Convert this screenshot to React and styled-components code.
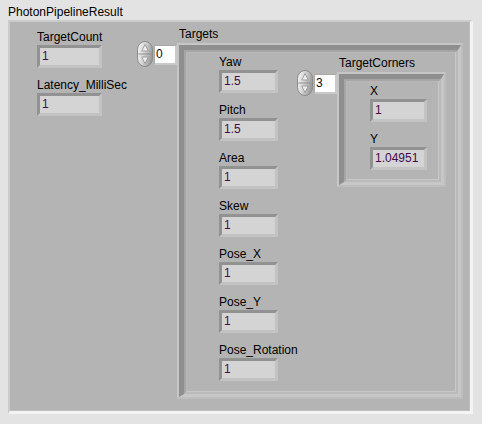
import React, { useId } from "react";
import styled, { createGlobalStyle } from "styled-components";

const GlobalStyle = createGlobalStyle`
  html, body { margin: 0; padding: 0; background: #e3e3e3; }
  body { font-family: "Liberation Sans", Arial, sans-serif; font-size: 12px; color: #000; }
`;

const Page = styled.div`
  box-sizing: border-box;
  width: 482px;
  height: 424px;
  padding: 5px 0 0 8px;
  background: #e3e3e3;
  overflow: hidden;
`;

const Title = styled.div`
  line-height: 14px;
  height: 14px;
  margin-bottom: 1px;
  white-space: nowrap;
`;

const OuterCluster = styled.div`
  box-sizing: border-box;
  width: 465px;
  height: 394px;
  background: #b4b4b4;
  border-style: solid;
  border-width: 2px 3px 3px 2px;
  border-color: #cbcbcb #f4f4f4 #f4f4f4 #cbcbcb;
  box-shadow: inset -1px -1px 0 #bfbfbf;
  display: flex;
  align-items: flex-start;
  padding-left: 27px;
`;

const Column = styled.div`
  display: flex;
  flex-direction: column;
  gap: 10px;
  width: ${(p) => p.$w}px;
  flex: none;
  margin-top: ${(p) => p.$top || 0}px;
`;

const Field = styled.div`
  display: flex;
  flex-direction: column;
  gap: 1px;
`;

const Label = styled.div`
  line-height: 14px;
  height: 14px;
  width: 100%;
  white-space: nowrap;
  overflow: visible;
`;

const NumBox = styled.div`
  box-sizing: border-box;
  width: 100%;
  height: 23px;
  border: 3px solid;
  border-color: #929292 #c3c3c3 #c3c3c3 #929292;
  background: #d4d4d4;
  padding-left: 2px;
  line-height: 17px;
  color: #420c4a;
  white-space: nowrap;
`;

const ArrayBlock = styled.div`
  display: grid;
  grid-template-columns: auto auto;
  grid-template-rows: auto auto;
  flex: none;
  margin-top: ${(p) => p.$top}px;
  margin-left: ${(p) => p.$left}px;
`;

const ArrayLabel = styled.div`
  grid-column: 2;
  grid-row: 1;
  padding-left: 2px;
  line-height: 14px;
  height: 14px;
  margin-bottom: 2px;
  white-space: nowrap;
`;

const IndexControl = styled.div`
  grid-column: 1;
  grid-row: 2;
  display: flex;
  align-items: flex-start;
  margin-top: -2px;
`;

const SpinnerSvg = styled.svg`
  display: block;
  width: 16px;
  height: 26px;
`;

const IndexBox = styled.div`
  box-sizing: border-box;
  width: 23px;
  height: 20px;
  margin: 4px 0 0 1px;
  background: #ffffff;
  border-style: solid;
  border-width: 1px 2px 2px 1px;
  border-color: #a8a8a8 #c9c9c9 #c9c9c9 #a8a8a8;
  padding-left: 1px;
  line-height: 17px;
  color: #0a0a0a;
`;

const ArrayFrame = styled.div`
  grid-column: 2;
  grid-row: 2;
  border: 2px solid;
  border-color: #c6c6c6 #bdbdbd #bdbdbd #c6c6c6;
`;

const ArrayGroove = styled.div`
  border-style: solid;
  border-width: 5px 3px 3px 5px;
  border-color: #8f8f8f #c7c7c7 #c7c7c7 #8f8f8f;
`;

const ArrayWell = styled.div`
  border: 2px solid;
  border-color: #a6a6a6 #bababa #bababa #a6a6a6;
`;

const ElementCluster = styled.div`
  box-sizing: border-box;
  width: ${(p) => p.$w}px;
  height: ${(p) => p.$h}px;
  background: #b4b4b4;
  border: 1px solid;
  border-color: #b8b8b8 #c8c8c8 #c8c8c8 #b8b8b8;
  display: flex;
  align-items: flex-start;
  padding: 2px 0 0 ${(p) => p.$pl}px;
`;

function Spinner() {
  const id = useId().replace(/:/g, "");
  return (
    <SpinnerSvg viewBox="0 0 16 26">
      <defs>
        <linearGradient id={`g${id}`} x1="0" y1="0" x2="1" y2="0.3">
          <stop offset="0" stopColor="#f6f6f6" />
          <stop offset="0.45" stopColor="#dadada" />
          <stop offset="1" stopColor="#9e9e9e" />
        </linearGradient>
      </defs>
      <rect x="0.5" y="0.5" width="15" height="25" rx="7.5" ry="8" fill={`url(#g${id})`} stroke="#8a8a8a" />
      <line x1="1.5" y1="13" x2="14.5" y2="13" stroke="#8e8e8e" strokeWidth="1" />
      <path d="M8 3.5 L11.3 10 L4.7 10 Z" fill="#ececec" stroke="#9a9a9a" strokeWidth="0.9" />
      <path d="M8 22.5 L11.3 16 L4.7 16 Z" fill="#ececec" stroke="#9a9a9a" strokeWidth="0.9" />
    </SpinnerSvg>
  );
}

function Num({ label, value }) {
  return (
    <Field>
      <Label>{label}</Label>
      <NumBox>{value}</NumBox>
    </Field>
  );
}

function ArrayOf({ label, index, top, left, children }) {
  return (
    <ArrayBlock $top={top} $left={left}>
      <ArrayLabel>{label}</ArrayLabel>
      <IndexControl>
        <Spinner />
        <IndexBox>{index}</IndexBox>
      </IndexControl>
      <ArrayFrame>
        <ArrayGroove>
          <ArrayWell>{children}</ArrayWell>
        </ArrayGroove>
      </ArrayFrame>
    </ArrayBlock>
  );
}

const targetFields = [
  ["Yaw", "1.5"],
  ["Pitch", "1.5"],
  ["Area", "1"],
  ["Skew", "1"],
  ["Pose_X", "1"],
  ["Pose_Y", "1"],
  ["Pose_Rotation", "1"],
];

export default function App() {
  return (
    <Page>
      <GlobalStyle />
      <Title>PhotonPipelineResult</Title>
      <OuterCluster>
        <Column $top={8} $w={65}>
          <Num label="TargetCount" value="1" />
          <Num label="Latency_MilliSec" value="1" />
        </Column>
        <ArrayOf label="Targets" index="0" top={5} left={35}>
          <ElementCluster $w={270} $h={340} $pl={32}>
            <Column $w={59}>
              {targetFields.map(([l, v]) => (
                <Num key={l} label={l} value={v} />
              ))}
            </Column>
            <ArrayOf label="TargetCorners" index="3" top={1} left={19}>
              <ElementCluster $w={93} $h={99} $pl={23}>
                <Column $w={57}>
                  <Num label="X" value="1" />
                  <Num label="Y" value="1.04951" />
                </Column>
              </ElementCluster>
            </ArrayOf>
          </ElementCluster>
        </ArrayOf>
      </OuterCluster>
    </Page>
  );
}
